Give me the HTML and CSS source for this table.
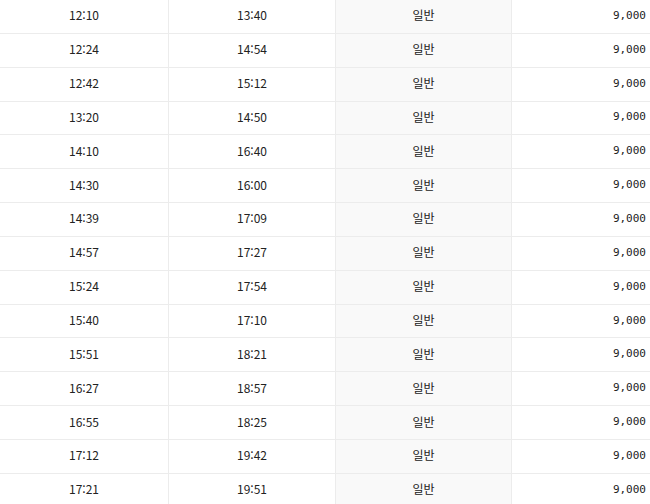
FILE: index.html
```html
<!DOCTYPE html>
<html lang="ko">
<head>
<meta charset="utf-8">
<title>시간표</title>
<link rel="stylesheet" href="styles.css">
</head>
<body>
<div class="table">
  <div class="row"><div class="cell">12:10</div><div class="cell">13:40</div><div class="cell grade">일반</div><div class="cell price">9,000</div></div>
  <div class="row"><div class="cell">12:24</div><div class="cell">14:54</div><div class="cell grade">일반</div><div class="cell price">9,000</div></div>
  <div class="row"><div class="cell">12:42</div><div class="cell">15:12</div><div class="cell grade">일반</div><div class="cell price">9,000</div></div>
  <div class="row"><div class="cell">13:20</div><div class="cell">14:50</div><div class="cell grade">일반</div><div class="cell price">9,000</div></div>
  <div class="row"><div class="cell">14:10</div><div class="cell">16:40</div><div class="cell grade">일반</div><div class="cell price">9,000</div></div>
  <div class="row"><div class="cell">14:30</div><div class="cell">16:00</div><div class="cell grade">일반</div><div class="cell price">9,000</div></div>
  <div class="row"><div class="cell">14:39</div><div class="cell">17:09</div><div class="cell grade">일반</div><div class="cell price">9,000</div></div>
  <div class="row"><div class="cell">14:57</div><div class="cell">17:27</div><div class="cell grade">일반</div><div class="cell price">9,000</div></div>
  <div class="row"><div class="cell">15:24</div><div class="cell">17:54</div><div class="cell grade">일반</div><div class="cell price">9,000</div></div>
  <div class="row"><div class="cell">15:40</div><div class="cell">17:10</div><div class="cell grade">일반</div><div class="cell price">9,000</div></div>
  <div class="row"><div class="cell">15:51</div><div class="cell">18:21</div><div class="cell grade">일반</div><div class="cell price">9,000</div></div>
  <div class="row"><div class="cell">16:27</div><div class="cell">18:57</div><div class="cell grade">일반</div><div class="cell price">9,000</div></div>
  <div class="row"><div class="cell">16:55</div><div class="cell">18:25</div><div class="cell grade">일반</div><div class="cell price">9,000</div></div>
  <div class="row"><div class="cell">17:12</div><div class="cell">19:42</div><div class="cell grade">일반</div><div class="cell price">9,000</div></div>
  <div class="row"><div class="cell">17:21</div><div class="cell">19:51</div><div class="cell grade">일반</div><div class="cell price">9,000</div></div>
</div>
</body>
</html>
```
FILE: styles.css
```css
html, body {
  margin: 0;
  padding: 0;
  background: #ffffff;
}
body {
  font-family: "Noto Sans CJK KR", "Noto Sans", sans-serif;
  font-size: 12px;
  color: #222222;
  overflow: hidden;
}
.table {
  display: flex;
  flex-direction: column;
  width: 650px;
}
.row {
  display: grid;
  grid-template-columns: 169px 167px 176px 1fr;
  height: 33.85px;
  box-sizing: border-box;
  border-bottom: 1px solid #ececec;
}
.cell {
  display: flex;
  align-items: center;
  justify-content: center;
  box-sizing: border-box;
  border-right: 1px solid #ececec;
  line-height: 1;
  padding-bottom: 2px;
}
.cell.grade {
  background: #f9f9f9;
}
.cell.price {
  border-right: none;
  justify-content: flex-end;
  padding-right: 4px;
  font-family: "DejaVu Sans Mono", monospace;
  font-size: 11px;
}
```
